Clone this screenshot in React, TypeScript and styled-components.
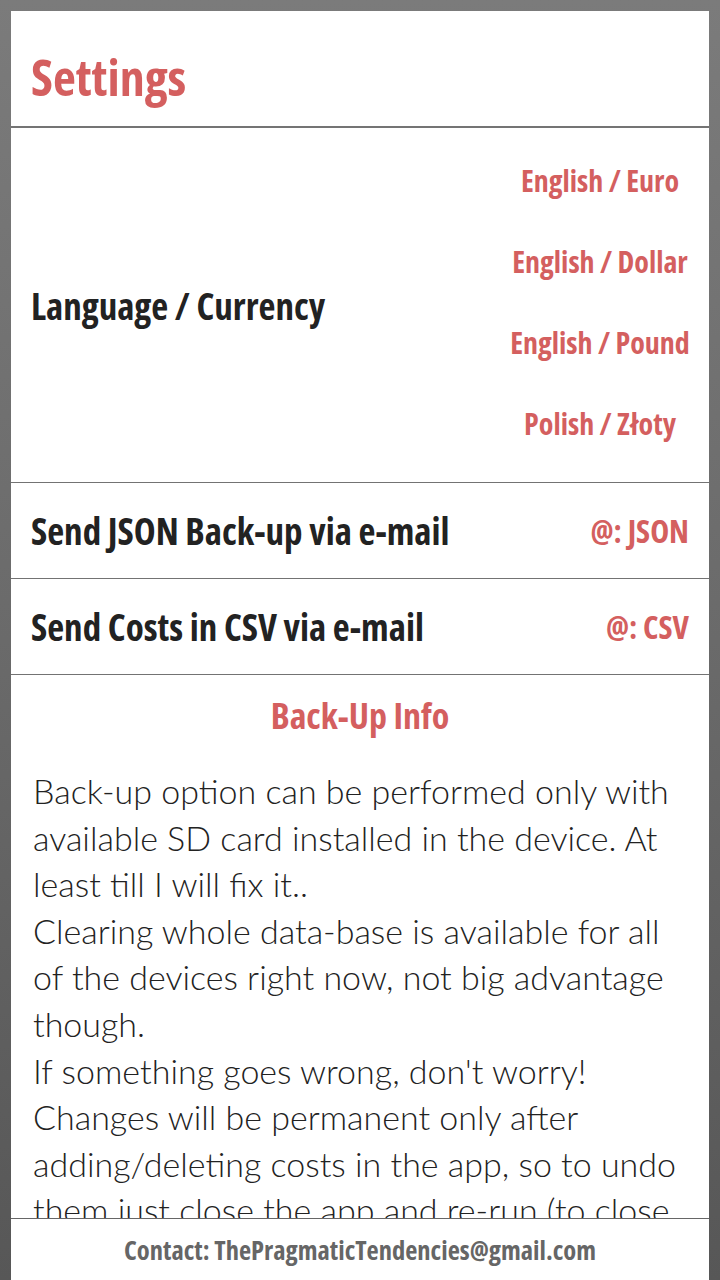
import styled, { createGlobalStyle } from 'styled-components';

const GlobalStyle = createGlobalStyle`
  html, body {
    margin: 0;
    padding: 0;
    height: 100%;
  }
  body {
    background: linear-gradient(180deg, #7b7b7b 0%, #6a6a6a 50%, #575757 100%);
    overflow: hidden;
  }
  #root {
    height: 100%;
  }
`;

const narrow = `"Open Sans", "Roboto Condensed", sans-serif`;
const accent = '#d45f5f';

const Frame = styled.div`
  height: 100%;
  box-sizing: border-box;
  padding: 11px 11px 0 11px;
  display: flex;
`;

const Panel = styled.main`
  flex: 1;
  background: #fff;
  display: flex;
  flex-direction: column;
  overflow: hidden;
`;

const Scroll = styled.div`
  flex: 1;
  overflow: hidden;
`;

const Header = styled.header`
  height: 117px;
  border-bottom: 2px solid #747474;
  display: flex;
  align-items: flex-end;
  padding: 0 20px 24px;
  box-sizing: border-box;
`;

const Title = styled.h1`
  margin: 0;
  font-family: ${narrow};
  font-stretch: 75%;
  font-weight: 700;
  font-size: 50px;
  line-height: 1;
  color: ${accent};
`;

const Row = styled.section<{ $tall?: boolean }>`
  display: flex;
  align-items: center;
  justify-content: space-between;
  height: ${p => (p.$tall ? '355px' : '96px')};
  box-sizing: border-box;
  border-bottom: 1px solid #737373;
  padding: 0 20px;
`;

const Label = styled.div`
  font-family: ${narrow};
  font-stretch: 75%;
  font-weight: 700;
  font-size: 37px;
  color: #222;
  white-space: nowrap;
`;

const Action = styled.button`
  border: 0;
  background: none;
  padding: 0;
  font-family: ${narrow};
  font-stretch: 75%;
  font-weight: 700;
  font-size: 32px;
  color: ${accent};
  cursor: pointer;
  white-space: nowrap;
`;

const Options = styled.div`
  width: 180px;
  margin-right: -1px;
  padding-bottom: 6px;
  display: flex;
  flex-direction: column;
`;

const Option = styled(Action)`
  height: 81px;
  font-size: 30px;
  text-align: center;
`;

const Info = styled.article`
  padding: 18px 22px 0;
`;

const InfoTitle = styled.h2`
  margin: 0 0 29px;
  text-align: center;
  font-family: ${narrow};
  font-stretch: 75%;
  font-weight: 700;
  font-size: 36px;
  line-height: 46px;
  color: ${accent};
`;

const InfoText = styled.p`
  margin: 0;
  font-family: Lato, "Open Sans", sans-serif;
  font-weight: 300;
  font-size: 34px;
  line-height: 46.6px;
  color: #222;
`;

const Footer = styled.footer`
  height: 61px;
  flex-shrink: 0;
  border-top: 1px solid #666;
  display: flex;
  align-items: center;
  justify-content: center;
  font-family: ${narrow};
  font-stretch: 75%;
  font-weight: 700;
  font-size: 26.5px;
  color: #666;
`;

const languages = ['English / Euro', 'English / Dollar', 'English / Pound', 'Polish / Złoty'];

export default function App() {
  return (
    <>
      <GlobalStyle />
      <Frame>
        <Panel>
          <Scroll>
            <Header>
              <Title>Settings</Title>
            </Header>
            <Row $tall>
              <Label>Language / Currency</Label>
              <Options>
                {languages.map(l => (
                  <Option key={l}>{l}</Option>
                ))}
              </Options>
            </Row>
            <Row>
              <Label>Send JSON Back-up via e-mail</Label>
              <Action>@: JSON</Action>
            </Row>
            <Row>
              <Label>Send Costs in CSV via e-mail</Label>
              <Action>@: CSV</Action>
            </Row>
            <Info>
              <InfoTitle>Back-Up Info</InfoTitle>
              <InfoText>
                Back-up option can be performed only with available SD card installed in the device. At least till I will fix it..
                <br />
                Clearing whole data-base is available for all of the devices right now, not big advantage though.
                <br />
                If something goes wrong, don't worry! Changes will be permanent only after adding/deleting costs in the app, so to undo them just close the app and re-run (to close the app use the back button).
              </InfoText>
            </Info>
          </Scroll>
          <Footer>Contact: ThePragmaticTendencies@gmail.com</Footer>
        </Panel>
      </Frame>
    </>
  );
}
